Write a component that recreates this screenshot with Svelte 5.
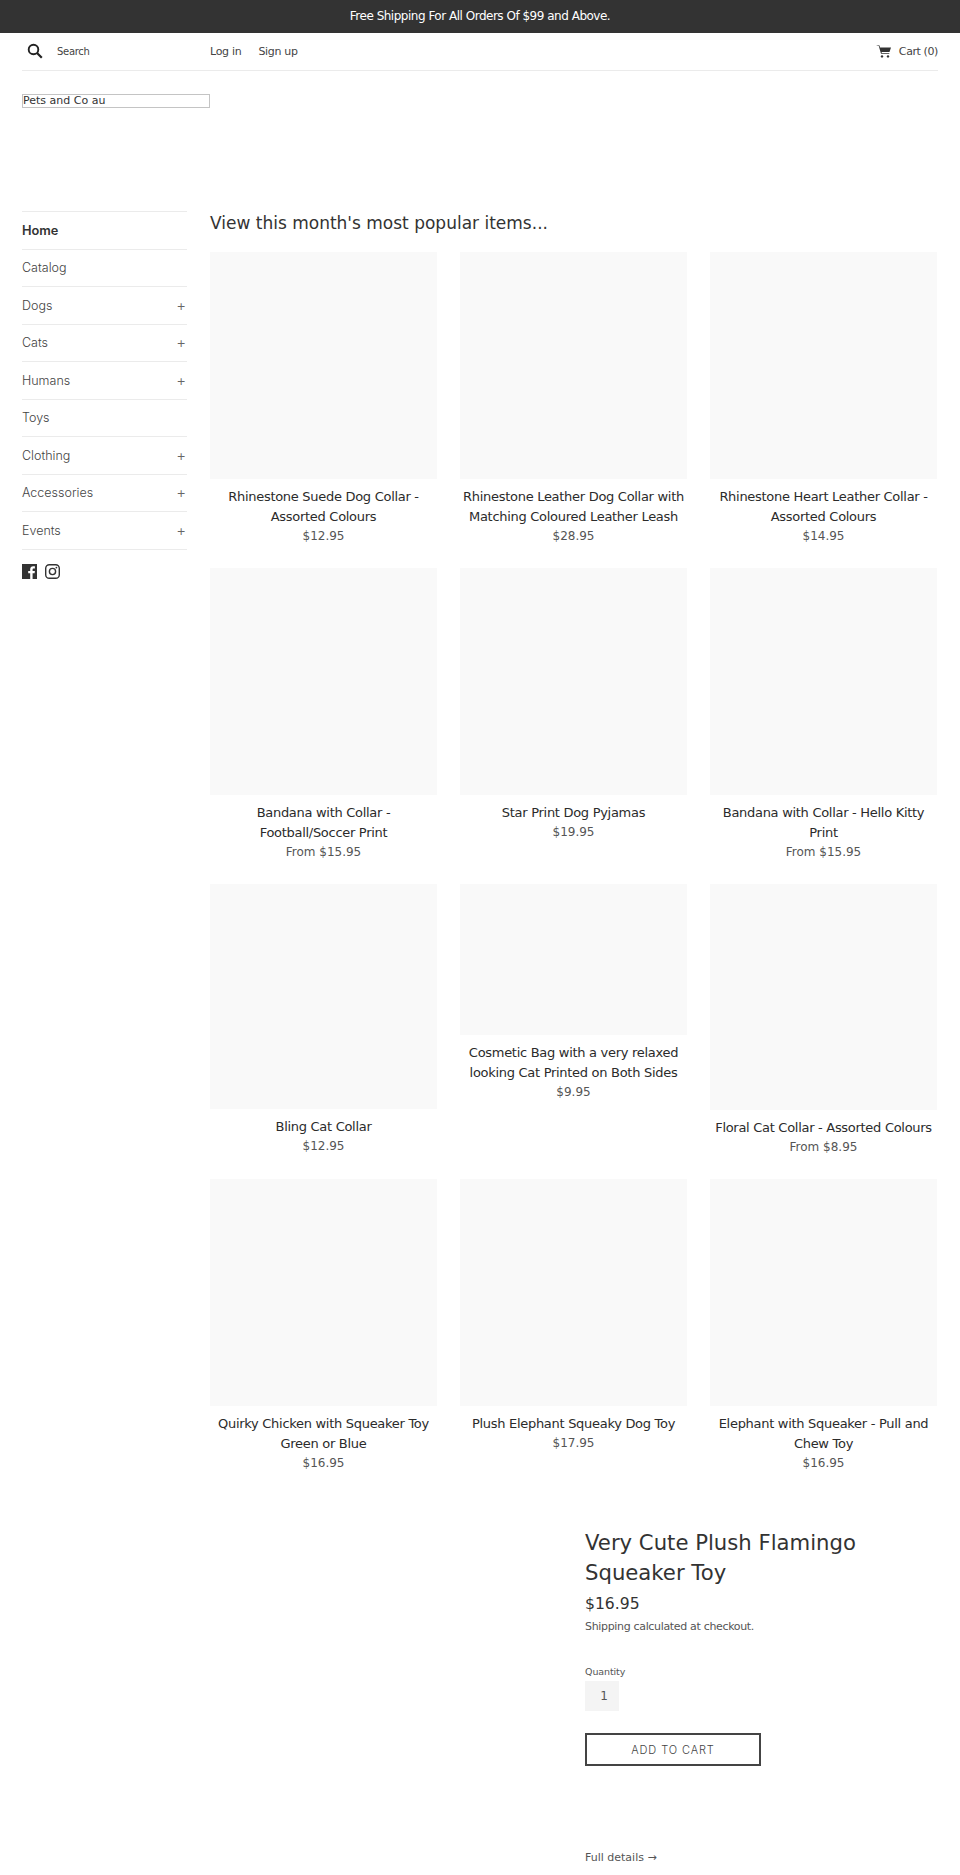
<script>
  const nav = [
    { label: 'Home', active: true },
    { label: 'Catalog' },
    { label: 'Dogs', more: true },
    { label: 'Cats', more: true },
    { label: 'Humans', more: true },
    { label: 'Toys' },
    { label: 'Clothing', more: true },
    { label: 'Accessories', more: true },
    { label: 'Events', more: true }
  ];

  const products = [
    { title: 'Rhinestone Suede Dog Collar - Assorted Colours', price: '$12.95', h: 227 },
    { title: 'Rhinestone Leather Dog Collar with Matching Coloured Leather Leash', price: '$28.95', h: 227 },
    { title: 'Rhinestone Heart Leather Collar - Assorted Colours', price: '$14.95', h: 227 },
    { title: 'Bandana with Collar - Football/Soccer Print', price: 'From $15.95', h: 227 },
    { title: 'Star Print Dog Pyjamas', price: '$19.95', h: 227 },
    { title: 'Bandana with Collar - Hello Kitty Print', price: 'From $15.95', h: 227 },
    { title: 'Bling Cat Collar', price: '$12.95', h: 225 },
    { title: 'Cosmetic Bag with a very relaxed looking Cat Printed on Both Sides', price: '$9.95', h: 151 },
    { title: 'Floral Cat Collar - Assorted Colours', price: 'From $8.95', h: 226 },
    { title: 'Quirky Chicken with Squeaker Toy Green or Blue', price: '$16.95', h: 227 },
    { title: 'Plush Elephant Squeaky Dog Toy', price: '$17.95', h: 227 },
    { title: 'Elephant with Squeaker - Pull and Chew Toy', price: '$16.95', h: 227 }
  ];
</script>

<div class="announcement">Free Shipping For All Orders Of $99 and Above.</div>

<div class="page">
  <header class="top">
    <div class="search">
      <svg class="search-icon" viewBox="0 0 16 16" width="16" height="16">
        <circle cx="6.500" cy="6.500" r="4.800" fill="none" stroke="#222" stroke-width="1.900" />
        <path d="M10 10l4.800 4.800" stroke="#222" stroke-width="2.200" fill="none" />
      </svg>
      <span>Search</span>
    </div>
    <div class="account">
      <a href="#login">Log in</a>
      <a href="#signup">Sign up</a>
    </div>
    <a class="cart" href="#cart">
      <svg viewBox="0 0 15 13" width="15" height="13">
        <path d="M0 0l2.700.8L5 8.800h8.300v-.9H5.800l-.2-.8h7.900L15 2.400H4L3.500.4.300-.4z" fill="#333" />
        <circle cx="6" cy="11.400" r="1.200" fill="#333" />
        <circle cx="12" cy="11.400" r="1.200" fill="#333" />
      </svg>
      <span>Cart (0)</span>
    </a>
  </header>

  <div class="logo">Pets and Co au</div>

  <div class="layout">
    <aside>
      <ul class="nav">
        {#each nav as item}
          <li class:active={item.active}>
            <span>{item.label}</span>
            {#if item.more}<span class="plus">+</span>{/if}
          </li>
        {/each}
      </ul>
      <div class="social">
        <svg viewBox="0 0 15 15" width="15" height="15">
          <path d="M0 0h15v15h-4.400V9.200h2l.3-2.300h-2.300V5.500c0-.7.200-1.100 1.100-1.100h1.200V2.300c-.2 0-.9-.1-1.700-.1-1.800 0-3 1.100-3 3.100v1.600h-2v2.300h2V15H0z" fill="#333" />
        </svg>
        <svg viewBox="0 0 15 15" width="15" height="15">
          <rect x=".7" y=".7" width="13.600" height="13.600" rx="3.600" fill="none" stroke="#333" stroke-width="1.400" />
          <circle cx="7.500" cy="7.500" r="3.100" fill="none" stroke="#333" stroke-width="1.400" />
          <circle cx="11.400" cy="3.600" r=".9" fill="#333" />
        </svg>
      </div>
    </aside>

    <main>
      <h2>View this month's most popular items...</h2>
      <div class="grid">
        {#each products as p}
          <div class="card">
            <div class="thumb" style="height: {p.h}px"></div>
            <div class="title">{p.title}</div>
            <div class="price">{p.price}</div>
          </div>
        {/each}
      </div>

      <section class="featured">
        <h1>Very Cute Plush Flamingo Squeaker Toy</h1>
        <div class="big-price">$16.95</div>
        <p class="shipping">Shipping calculated at checkout.</p>
        <label for="qty">Quantity</label>
        <div class="qty" id="qty">1</div>
        <button type="button">ADD TO CART</button>
        <a class="details" href="#details">Full details →</a>
      </section>
    </main>
  </div>
</div>

<style>
  :global(body) {
    margin: 0;
    background: #fff;
    color: #333;
    font-family: "DejaVu Sans", sans-serif;
  }

  a {
    color: inherit;
    text-decoration: none;
  }

  .announcement {
    height: 33px;
    line-height: 33px;
    background: #333;
    color: #fff;
    text-align: center;
    font-size: 12px;
    letter-spacing: -0.49px;
  }

  .page {
    padding: 0 22px;
  }

  .top {
    display: flex;
    align-items: center;
    height: 36px;
    padding-bottom: 1px;
    border-bottom: 1px solid #ebebeb;
    font-size: 11px;
    letter-spacing: -0.3px;
    color: #444;
  }

  .search {
    width: 188px;
    display: flex;
    align-items: center;
    gap: 14px;
    padding-left: 5px;
    box-sizing: border-box;
    font-size: 10px;
  }

  .account {
    display: flex;
    gap: 17px;
  }

  .cart {
    margin-left: auto;
    display: flex;
    align-items: center;
    gap: 8px;
    letter-spacing: -0.4px;
  }

  .logo {
    width: 186px;
    margin-top: 23px;
    height: 12px;
    line-height: 12px;
    border: 1px solid #c4c4c4;
    font-size: 11px;
  }

  .layout {
    display: flex;
    margin-top: 103px;
  }

  aside {
    width: 165px;
    margin-right: 23px;
    flex-shrink: 0;
  }

  .nav {
    list-style: none;
    margin: 0;
    padding: 0;
    border-top: 1px solid #ebebeb;
  }

  .nav li {
    display: flex;
    justify-content: space-between;
    align-items: center;
    height: 36.500px;
    border-bottom: 1px solid #ebebeb;
    font-family: "Inter", sans-serif;
    font-size: 12.500px;
    font-weight: 300;
    color: #444;
  }

  .nav li.active {
    font-weight: 600;
    font-size: 12.800px;
    color: #333;
  }

  .plus {
    padding-right: 1px;
    font-size: 15px;
    color: #666;
  }

  .social {
    display: flex;
    gap: 8px;
    margin-top: 14px;
  }

  main {
    flex: 1;
    min-width: 0;
  }

  h2 {
    margin: 0;
    height: 41px;
    line-height: 24px;
    font-size: 17px;
    font-weight: 400;
    color: #333;
  }

  .grid {
    display: grid;
    grid-template-columns: repeat(3, 227px);
    column-gap: 23px;
    row-gap: 22px;
  }

  .thumb {
    background: #f9f9f9;
    margin-bottom: 8px;
  }

  .title {
    text-align: center;
    font-size: 13px;
    letter-spacing: -0.29px;
    line-height: 20px;
    color: #2b2b2b;
  }

  .price {
    text-align: center;
    font-size: 12px;
    line-height: 19px;
    color: #555;
  }

  .featured {
    margin: 55px 0 0 375px;
    display: flex;
    flex-direction: column;
    align-items: flex-start;
  }

  h1 {
    margin: 0;
    font-size: 21.200px;
    line-height: 30px;
    font-weight: 400;
    color: #333;
  }

  .big-price {
    font-size: 15.600px;
    margin-top: 7px;
  }

  .shipping {
    font-size: 11px;
    letter-spacing: -0.33px;
    margin: 7px 0 0;
    color: #555;
  }

  label {
    font-size: 9.500px;
    letter-spacing: -0.1px;
    margin-top: 33px;
    color: #555;
  }

  .qty {
    width: 30px;
    height: 30px;
    line-height: 30px;
    margin-top: 4px;
    padding-left: 4px;
    background: #f4f4f4;
    text-align: center;
    font-size: 12px;
    color: #555;
  }

  button {
    width: 176px;
    height: 33px;
    margin-top: 22px;
    background: #fff;
    border: 2px solid #444;
    font-family: "Inter", sans-serif;
    font-weight: 300;
    font-size: 11px;
    letter-spacing: 0.9px;
    color: #444;
  }

  .details {
    margin-top: 85px;
    font-size: 11px;
    color: #555;
  }
</style>
